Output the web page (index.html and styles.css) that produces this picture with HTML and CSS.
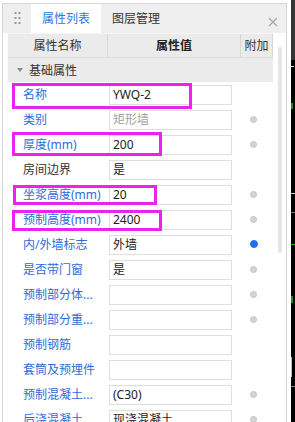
FILE: index.html
```html
<!DOCTYPE html>
<html lang="zh">
<head>
    <meta charset="UTF-8">
    <meta name="viewport" content="width=device-width, initial-scale=1.0">
    <title>属性列表</title>
    <link rel="stylesheet" href="styles.css">
</head>
<body>
    <div class="app">
        <div class="panel">
            <div class="tabbar">
                <div class="grip">
                    <svg width="8" height="14" viewBox="0 0 8 14">
                        <rect x="0.5" y="0" width="2" height="2" fill="#9a9a9a"/>
                        <rect x="4.5" y="0" width="2" height="2" fill="#9a9a9a"/>
                        <rect x="0.5" y="5" width="2" height="2" fill="#9a9a9a"/>
                        <rect x="4.5" y="5" width="2" height="2" fill="#9a9a9a"/>
                        <rect x="0.5" y="10" width="2" height="2" fill="#9a9a9a"/>
                        <rect x="4.5" y="10" width="2" height="2" fill="#9a9a9a"/>
                    </svg>
                </div>
                <div class="tab active">属性列表</div>
                <div class="tab">图层管理</div>
                <div class="close">
                    <svg width="10" height="10" viewBox="0 0 10 10">
                        <path d="M1 1 L9 9 M9 1 L1 9" stroke="#a8a8a8" stroke-width="1.2"/>
                    </svg>
                </div>
            </div>

            <div class="panel-body">
                <div class="grid">
                    <div class="grid-head">
                        <div class="head-cell">属性名称</div>
                        <div class="head-cell strong">属性值</div>
                        <div class="head-cell">附加</div>
                    </div>
                    <div class="group"><span class="caret"></span>基础属性</div>

                    <div class="row">
                        <div class="name">名称</div>
                        <div class="val">YWQ-2</div>
                        <div class="extra"></div>
                    </div>
                    <div class="row">
                        <div class="name">类别</div>
                        <div class="val muted">矩形墙</div>
                        <div class="extra"><span class="dot"></span></div>
                    </div>
                    <div class="row">
                        <div class="name">厚度(mm)</div>
                        <div class="val">200</div>
                        <div class="extra"><span class="dot"></span></div>
                    </div>
                    <div class="row">
                        <div class="name plain">房间边界</div>
                        <div class="val">是</div>
                        <div class="extra"></div>
                    </div>
                    <div class="row">
                        <div class="name">坐浆高度(mm)</div>
                        <div class="val">20</div>
                        <div class="extra"><span class="dot"></span></div>
                    </div>
                    <div class="row">
                        <div class="name">预制高度(mm)</div>
                        <div class="val">2400</div>
                        <div class="extra"><span class="dot"></span></div>
                    </div>
                    <div class="row">
                        <div class="name">内/外墙标志</div>
                        <div class="val">外墙</div>
                        <div class="extra"><span class="dot on"></span></div>
                    </div>
                    <div class="row">
                        <div class="name">是否带门窗</div>
                        <div class="val">是</div>
                        <div class="extra"><span class="dot"></span></div>
                    </div>
                    <div class="row">
                        <div class="name">预制部分体...</div>
                        <div class="val"></div>
                        <div class="extra"><span class="dot"></span></div>
                    </div>
                    <div class="row">
                        <div class="name">预制部分重...</div>
                        <div class="val"></div>
                        <div class="extra"><span class="dot"></span></div>
                    </div>
                    <div class="row">
                        <div class="name">预制钢筋</div>
                        <div class="val"></div>
                        <div class="extra"></div>
                    </div>
                    <div class="row">
                        <div class="name">套筒及预埋件</div>
                        <div class="val"></div>
                        <div class="extra"></div>
                    </div>
                    <div class="row">
                        <div class="name">预制混凝土...</div>
                        <div class="val">(C30)</div>
                        <div class="extra"><span class="dot"></span></div>
                    </div>
                    <div class="row">
                        <div class="name">后浇混凝土</div>
                        <div class="val">现浇混凝土</div>
                        <div class="extra"><span class="dot"></span></div>
                    </div>
                </div>
                <div class="scroll"><div class="thumb"></div></div>
            </div>
        </div>

        <div class="canvas">
            <svg width="4" height="422" viewBox="0 0 4 422">
                <rect x="0" y="0" width="4" height="422" fill="#000"/>
                <rect x="0" y="0" width="4" height="60" fill="#353535"/>
                <rect x="0" y="66" width="3" height="1" fill="#e0e0e0"/>
                <rect x="0" y="103" width="2" height="6" fill="#1a8a1a"/>
                <rect x="0" y="193" width="4" height="1" fill="#d0d0d0"/>
                <rect x="0" y="212" width="4" height="1" fill="#777"/>
                <rect x="0" y="244" width="4" height="1" fill="#11bb11"/>
                <rect x="0" y="296" width="2" height="7" fill="#1a8a1a"/>
                <rect x="0" y="357" width="1" height="20" fill="#bbb"/>
                <rect x="0" y="386" width="4" height="1" fill="#888"/>
            </svg>
        </div>
    </div>

    <!-- annotation frames drawn over the grid -->
    <div class="mark mark-name"></div>
    <div class="mark mark-thick"></div>
    <div class="mark mark-grout"></div>
    <div class="mark mark-height"></div>
</body>
</html>
```

FILE: styles.css
```css
* {
    margin: 0;
    padding: 0;
    box-sizing: border-box;
}

body {
    font-family: 'Noto Sans', 'Noto Sans CJK SC', sans-serif;
    font-size: 12px;
    color: #333;
    background: #fff;
    height: 422px;
    overflow: hidden;
    position: relative;
}

.app {
    display: flex;
    height: 422px;
}

.panel {
    margin: 3px 0 0 2px;
    width: 285px;
    border: 1px solid #d6d6d6;
    border-bottom: none;
    background: #fff;
}

.tabbar {
    display: flex;
    height: 29px;
    background: #efefef;
}

.grip {
    width: 28px;
    padding: 8px 0 0 11px;
}

.tab {
    padding: 0 11px;
    line-height: 29px;
    color: #333;
}

.tab.active {
    background: #fff;
    color: #2a78e4;
}

.close {
    margin-left: auto;
    padding: 10px 8px 0 0;
}

.panel-body {
    display: flex;
    padding-left: 5px;
}

.grid {
    width: 265px;
}

.grid-head {
    display: grid;
    grid-template-columns: 100px 133px 32px;
    height: 25px;
    background: #ebebeb;
    border-top: 1px solid #f6f6f6;
    border-bottom: 1px solid #dcdcdc;
}

.head-cell {
    text-align: center;
    line-height: 23px;
    border-right: 1px solid #d8d8d8;
    color: #333;
}

.head-cell.strong {
    font-weight: 600;
    color: #222;
}

.group {
    display: flex;
    align-items: center;
    height: 24px;
    padding-left: 9px;
    background: #ebebeb;
    color: #333;
}

.caret {
    width: 0;
    height: 0;
    border-top: 4px solid #8a8a8a;
    border-left: 3px solid transparent;
    border-right: 3px solid transparent;
    margin-right: 6px;
}

.row {
    display: grid;
    grid-template-columns: 100px 133px 32px;
    height: 25px;
    padding-top: 3px;
    align-items: start;
}

.name {
    padding-left: 15px;
    line-height: 20px;
    color: #2f6bd9;
    white-space: nowrap;
}

.name.plain {
    color: #333;
}

.val {
    margin-left: 1px;
    width: 123px;
    height: 20px;
    border: 1px solid #dedede;
    padding-left: 3px;
    line-height: 18px;
    color: #222;
    white-space: nowrap;
}

.val.muted {
    color: #a0a0a0;
}

.extra {
    padding: 6px 0 0 9px;
}

.dot {
    display: block;
    width: 7px;
    height: 7px;
    border-radius: 50%;
    background: #d4d4d4;
    border: 1px solid #c3c3c3;
}

.dot.on {
    width: 8px;
    height: 8px;
    margin: -1px 0 0 0;
    background: #1a73e8;
    border-color: #1a6fe0;
}

.scroll {
    margin-left: 5px;
    padding-top: 14px;
}

.thumb {
    width: 4px;
    height: 206px;
    border-radius: 2px;
    background: #e6e6e6;
}

.canvas {
    margin-left: 4px;
    width: 4px;
    height: 422px;
}

.canvas svg {
    display: block;
}

.mark {
    position: absolute;
    border: 3px solid #ee22ee;
}

.mark-name {
    left: 12px;
    top: 83px;
    width: 180px;
    height: 26px;
}

.mark-thick {
    left: 12px;
    top: 132px;
    width: 150px;
    height: 24px;
}

.mark-grout {
    left: 13px;
    top: 185px;
    width: 144px;
    height: 20px;
}

.mark-height {
    left: 12px;
    top: 210px;
    width: 150px;
    height: 21px;
}
```
